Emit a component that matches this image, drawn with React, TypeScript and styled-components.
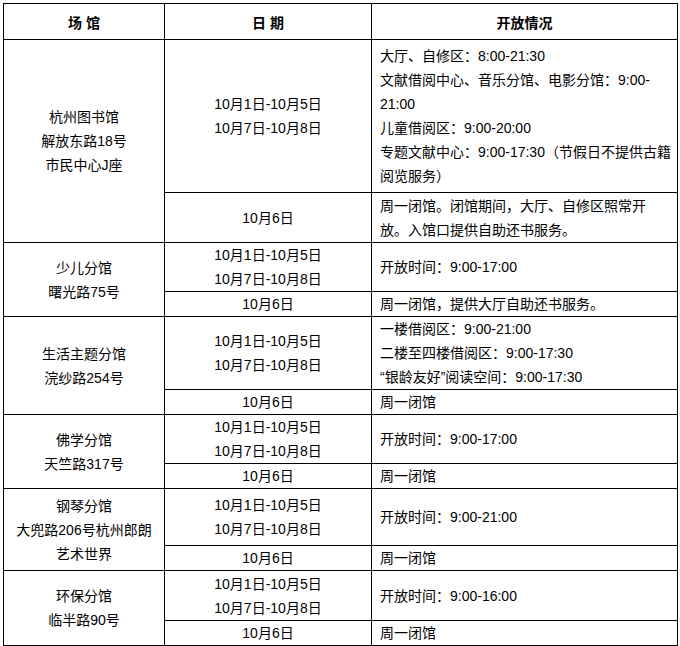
import React from 'react'
import styled, { createGlobalStyle } from 'styled-components'

const GlobalStyle = createGlobalStyle`
  html, body {
    margin: 0;
    padding: 0;
    background: #fff;
  }
  body {
    font-family: "Liberation Sans", "Noto Sans CJK SC", sans-serif;
    color: #000;
  }
`

const Page = styled.div`
  padding: 3px;
`

const Table = styled.table`
  width: 674px;
  table-layout: fixed;
  border-collapse: collapse;
  font-size: 14px;
`

const HeadCell = styled.th`
  border: 1px solid #000;
  height: 35px;
  padding: 0;
  font-weight: bold;
  text-align: center;
  vertical-align: middle;
  white-space: pre;
`

const Cell = styled.td<{ $align?: 'left' | 'center' }>`
  border: 1px solid #000;
  padding: ${(p) => (p.$align === 'left' ? '0 6px 0 8px' : '0 4px')};
  text-align: ${(p) => p.$align || 'center'};
  vertical-align: middle;
`

const Row = styled.tr<{ $h: number }>`
  height: ${(p) => p.$h}px;
`

const Line = styled.div`
  line-height: 24px;
  white-space: nowrap;
`

interface Venue {
  name: string[]
  info: string[]
  closed: string[]
  heights: [number, number]
}

const openDates = ['10月1日-10月5日', '10月7日-10月8日']

const venues: Venue[] = [
  {
    name: ['杭州图书馆', '解放东路18号', '市民中心J座'],
    info: [
      '大厅、自修区：8:00-21:30',
      '文献借阅中心、音乐分馆、电影分馆：9:00-',
      '21:00',
      '儿童借阅区：9:00-20:00',
      '专题文献中心：9:00-17:30（节假日不提供古籍',
      '阅览服务）',
    ],
    closed: ['周一闭馆。闭馆期间，大厅、自修区照常开', '放。入馆口提供自助还书服务。'],
    heights: [153, 50],
  },
  {
    name: ['少儿分馆', '曙光路75号'],
    info: ['开放时间：9:00-17:00'],
    closed: ['周一闭馆，提供大厅自助还书服务。'],
    heights: [49, 25],
  },
  {
    name: ['生活主题分馆', '浣纱路254号'],
    info: ['一楼借阅区：9:00-21:00', '二楼至四楼借阅区：9:00-17:30', '“银龄友好”阅读空间：9:00-17:30'],
    closed: ['周一闭馆'],
    heights: [73, 25],
  },
  {
    name: ['佛学分馆', '天竺路317号'],
    info: ['开放时间：9:00-17:00'],
    closed: ['周一闭馆'],
    heights: [49, 25],
  },
  {
    name: ['钢琴分馆', '大兜路206号杭州郎朗', '艺术世界'],
    info: ['开放时间：9:00-21:00'],
    closed: ['周一闭馆'],
    heights: [57, 25],
  },
  {
    name: ['环保分馆', '临半路90号'],
    info: ['开放时间：9:00-16:00'],
    closed: ['周一闭馆'],
    heights: [50, 24],
  },
]

export default function App() {
  return (
    <Page>
      <GlobalStyle />
      <Table>
        <colgroup>
          <col style={{ width: 161 }} />
          <col style={{ width: 207 }} />
          <col style={{ width: 306 }} />
        </colgroup>
        <thead>
          <tr>
            <HeadCell>场 馆</HeadCell>
            <HeadCell>日 期</HeadCell>
            <HeadCell>开放情况</HeadCell>
          </tr>
        </thead>
        <tbody>
          {venues.map((v) => (
            <React.Fragment key={v.name[0]}>
              <Row $h={v.heights[0]}>
                <Cell rowSpan={2}>
                  {v.name.map((n) => (
                    <Line key={n}>{n}</Line>
                  ))}
                </Cell>
                <Cell>
                  {openDates.map((d) => (
                    <Line key={d}>{d}</Line>
                  ))}
                </Cell>
                <Cell $align="left">
                  {v.info.map((t) => (
                    <Line key={t}>{t}</Line>
                  ))}
                </Cell>
              </Row>
              <Row $h={v.heights[1]}>
                <Cell>
                  <Line>10月6日</Line>
                </Cell>
                <Cell $align="left">
                  {v.closed.map((t) => (
                    <Line key={t}>{t}</Line>
                  ))}
                </Cell>
              </Row>
            </React.Fragment>
          ))}
        </tbody>
      </Table>
    </Page>
  )
}
